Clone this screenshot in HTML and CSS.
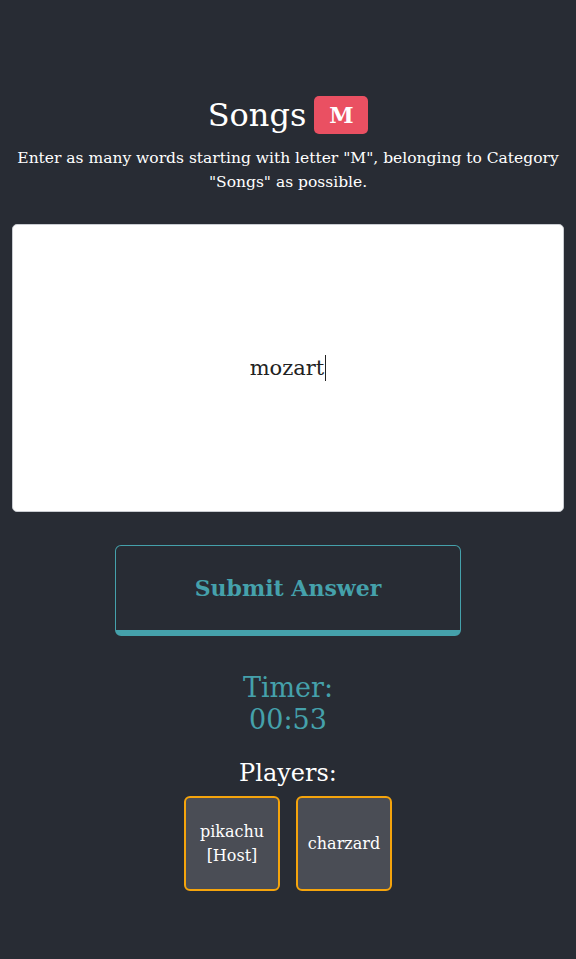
FILE: index.html
```html
<!DOCTYPE html>
<html>
<head>
<meta charset="utf-8">
<link rel="stylesheet" href="styles.css">
</head>
<body>
<main class="game">
  <h1 class="title">Songs <span class="badge">M</span></h1>
  <p class="subtitle">Enter as many words starting with letter "M", belonging to Category "Songs" as possible.</p>
  <div class="answer-box"><span class="answer">mozart</span><span class="caret"></span></div>
  <button class="submit">Submit Answer</button>
  <div class="timer">Timer:<br>00:53</div>
  <div class="players-label">Players:</div>
  <div class="players">
    <div class="player">pikachu<br>[Host]</div>
    <div class="player">charzard</div>
  </div>
</main>
</body>
</html>
```
FILE: styles.css
```css
html, body {
  margin: 0;
  padding: 0;
  background: #282c34;
}
body {
  font-family: "DejaVu Serif", "Liberation Serif", serif;
  color: #ffffff;
}
.game {
  display: flex;
  flex-direction: column;
  align-items: center;
  padding: 96px 12px 0;
}
.title {
  margin: 0;
  font-weight: normal;
  font-size: 32px;
  line-height: 38px;
  display: flex;
  align-items: center;
  gap: 8px;
}
.badge {
  display: inline-flex;
  align-items: center;
  justify-content: center;
  width: 54px;
  height: 38px;
  background: #ea5062;
  border-radius: 5px;
  font-size: 22px;
  font-weight: bold;
}
.subtitle {
  margin: 12px 0 0;
  font-size: 15.5px;
  line-height: 24px;
  text-align: center;
}
.answer-box {
  margin-top: 30px;
  align-self: stretch;
  height: 286px;
  background: #fff;
  border: 1px solid #c9ccd1;
  border-radius: 5px;
  display: flex;
  align-items: center;
  justify-content: center;
  color: #222;
  font-size: 21px;
}
.caret {
  display: inline-block;
  width: 1px;
  height: 26px;
  background: #222;
  margin-left: 1px;
}
.submit {
  margin-top: 33px;
  width: 346px;
  height: 91px;
  background: transparent;
  border: 1px solid #45a1ab;
  border-bottom: 6px solid #45a1ab;
  border-radius: 6px;
  color: #45a1ab;
  font-family: inherit;
  font-size: 22px;
  font-weight: bold;
}
.timer {
  margin-top: 36px;
  color: #45a1ab;
  font-size: 27px;
  line-height: 32px;
  text-align: center;
}
.players-label {
  margin-top: 22px;
  font-size: 24px;
  line-height: 30px;
}
.players {
  display: flex;
  gap: 16px;
  margin-top: 8px;
}
.player {
  width: 92px;
  height: 91px;
  border: 2px solid #f5a40c;
  border-radius: 6px;
  background: #4a4d55;
  display: flex;
  align-items: center;
  justify-content: center;
  text-align: center;
  font-size: 16px;
  line-height: 24px;
}
```
